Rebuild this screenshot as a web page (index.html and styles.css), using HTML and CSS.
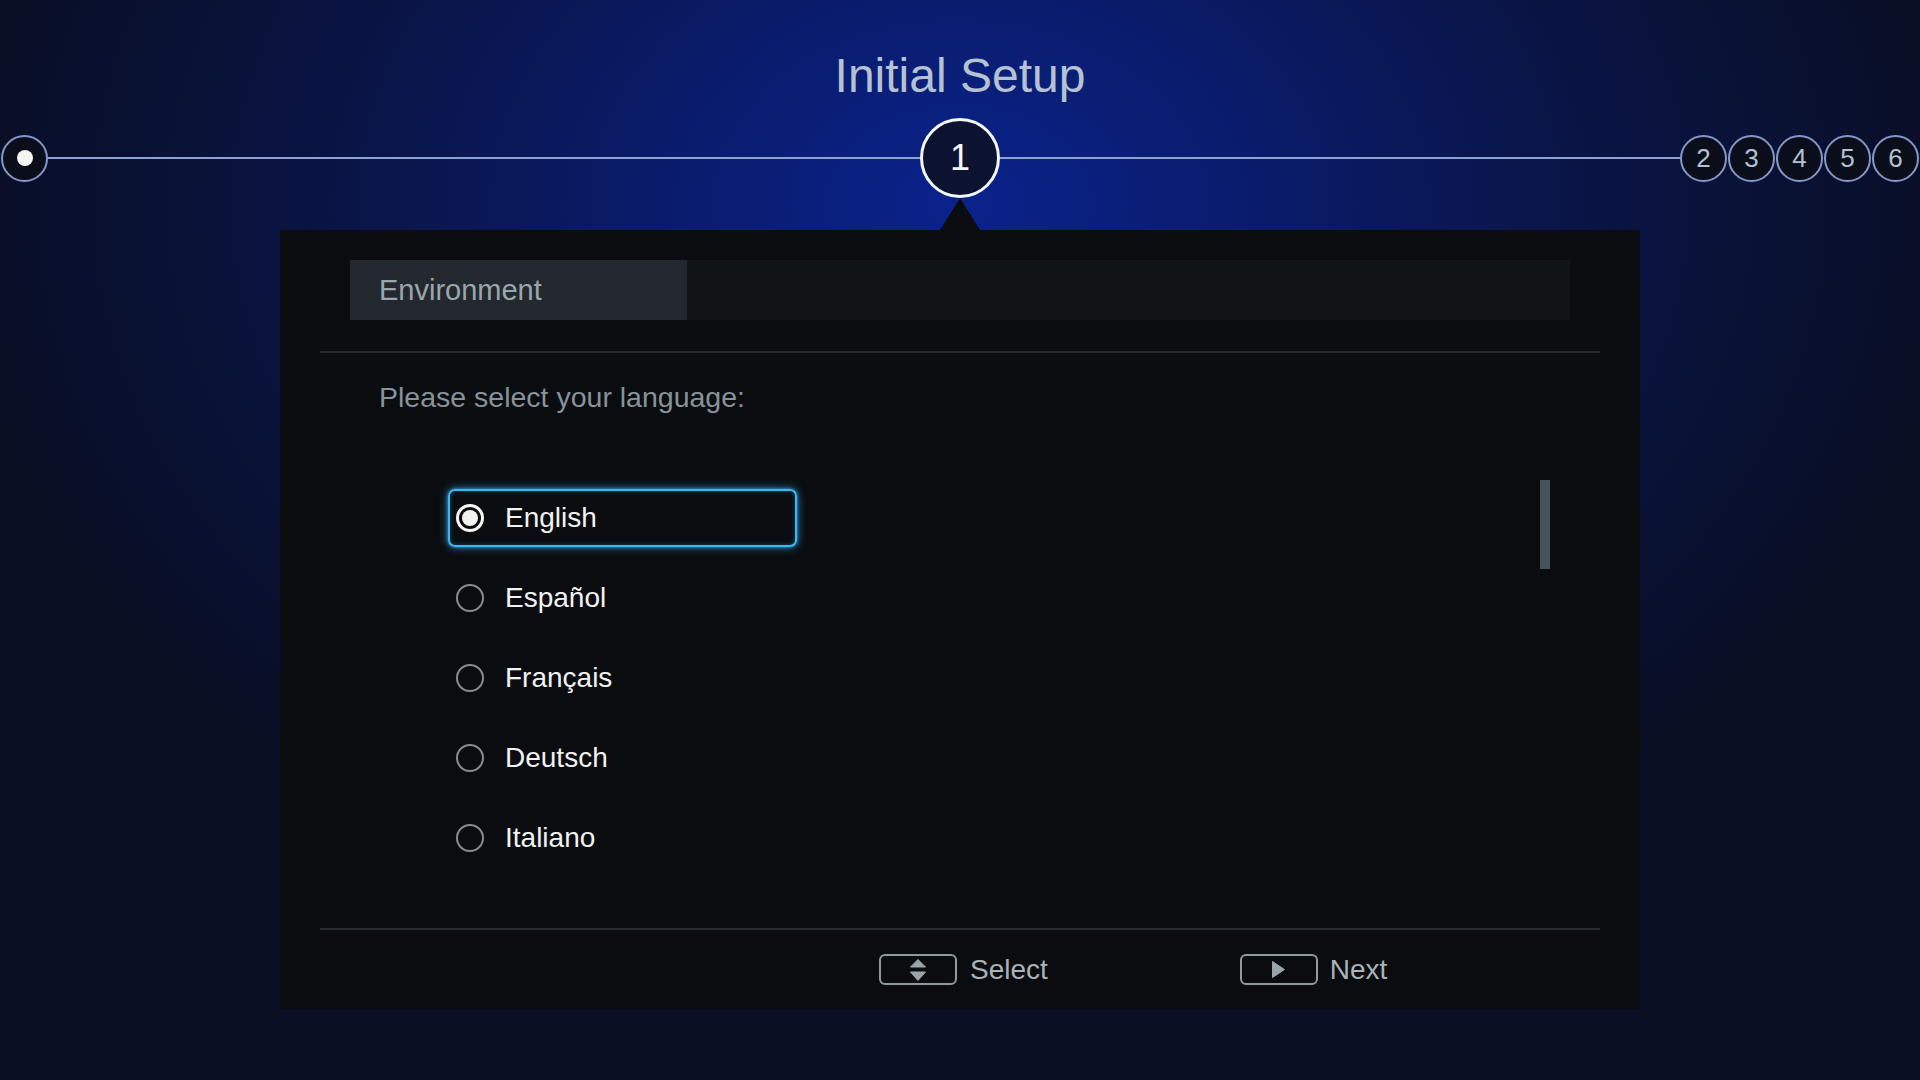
FILE: index.html
```html
<!DOCTYPE html>
<html lang="en">
<head>
    <meta charset="UTF-8">
    <meta name="viewport" content="width=device-width, initial-scale=1.0">
    <title>Initial Setup</title>
    <link rel="stylesheet" href="styles.css">
</head>
<body>
    <h1 class="title">Initial Setup</h1>

    <div class="stepper">
        <div class="stepper-side">
            <span class="step step-start"><span class="step-dot"></span></span>
            <span class="step-line"></span>
        </div>
        <div class="step-current">1</div>
        <div class="stepper-side">
            <span class="step-line"></span>
            <div class="step-group">
                <span class="step">2</span>
                <span class="step">3</span>
                <span class="step">4</span>
                <span class="step">5</span>
                <span class="step">6</span>
            </div>
        </div>
    </div>
    <div class="pointer"></div>

    <div class="panel">
        <div class="tabs">
            <div class="tab active">Environment</div>
        </div>
        <div class="divider divider-top"></div>

        <div class="content">
            <p class="prompt">Please select your language:</p>
            <div class="list">
                <ul class="options">
                    <li class="option selected"><span class="radio"></span>English</li>
                    <li class="option"><span class="radio"></span>Español</li>
                    <li class="option"><span class="radio"></span>Français</li>
                    <li class="option"><span class="radio"></span>Deutsch</li>
                    <li class="option"><span class="radio"></span>Italiano</li>
                </ul>
                <div class="scrollbar"></div>
            </div>
        </div>

        <div class="divider"></div>
        <div class="footer">
            <div class="hint">
                <span class="key">
                    <svg width="16" height="22" viewBox="0 0 16 22">
                        <polygon points="8,0.5 15.5,8 0.5,8" fill="#9aa4aa" stroke="#9aa4aa" stroke-width="1" stroke-linejoin="round"/>
                        <polygon points="0.5,13 15.5,13 8,21.5" fill="#9aa4aa" stroke="#9aa4aa" stroke-width="1" stroke-linejoin="round"/>
                    </svg>
                </span>
                Select
            </div>
            <div class="hint hint-next">
                <span class="key">
                    <svg width="13" height="17" viewBox="0 0 13 17">
                        <polygon points="0.5,0.5 12.5,8.5 0.5,16.5" fill="#9aa4aa" stroke="#9aa4aa" stroke-width="1" stroke-linejoin="round"/>
                    </svg>
                </span>
                Next
            </div>
        </div>
    </div>
</body>
</html>
```

FILE: styles.css
```css
* {
    margin: 0;
    padding: 0;
    box-sizing: border-box;
}

body {
    width: 1920px;
    height: 1080px;
    overflow: hidden;
    font-family: "Liberation Sans", Arial, sans-serif;
    background-color: #090d1e;
    background-image: radial-gradient(ellipse 1020px 760px at 50% 19%, #0a238c 0%, #0a1b6a 30%, #0a1444 62%, #090e22 100%);
}

.title {
    margin-top: 48px;
    font-size: 48px;
    font-weight: normal;
    line-height: 56px;
    text-align: center;
    color: #b6c2d2;
}

.stepper {
    display: grid;
    grid-template-columns: 1fr 80px 1fr;
    align-items: center;
    height: 80px;
    margin-top: 14px;
}

.stepper-side {
    display: flex;
    align-items: center;
}

.step-line {
    flex: 1;
    height: 2px;
    background: #8ea1d4;
}

.step {
    width: 47px;
    height: 47px;
    border: 2px solid #8596c8;
    border-radius: 50%;
    background: #0a0d1a;
    color: #b5c1d2;
    font-size: 26px;
    display: flex;
    justify-content: center;
    align-items: center;
    flex-shrink: 0;
}

.step-start {
    margin-left: 1px;
}

.step-dot {
    width: 16px;
    height: 16px;
    border-radius: 50%;
    background: #f4f4f0;
}

.step-group {
    display: flex;
    gap: 1px;
    margin-right: 1px;
}

.step-current {
    width: 80px;
    height: 80px;
    border: 3px solid #f4f6fa;
    border-radius: 50%;
    background: #0c1330;
    color: #f4f6fa;
    font-size: 36px;
    display: flex;
    justify-content: center;
    align-items: center;
}

.pointer {
    width: 0;
    height: 0;
    margin: 0 auto;
    border-left: 20px solid transparent;
    border-right: 20px solid transparent;
    border-bottom: 32px solid #0a0c0f;
}

.panel {
    width: 1360px;
    height: 779px;
    margin: 0 auto;
    padding: 30px 40px 0;
    background: #0a0c0f;
    display: flex;
    flex-direction: column;
}

.tabs {
    display: flex;
    height: 60px;
    margin: 0 30px;
    background: #111417;
}

.tab {
    width: 337px;
    padding-left: 29px;
    font-size: 29px;
    line-height: 60px;
    color: #9aa6ad;
}

.tab.active {
    background: #22282d;
}

.divider {
    height: 2px;
    background: #262c31;
}

.divider-top {
    margin-top: 31px;
}

.content {
    flex: 1;
}

.prompt {
    margin: 28px 0 0 59px;
    font-size: 28.5px;
    line-height: 32px;
    color: #87939a;
}

.list {
    display: flex;
    justify-content: space-between;
    margin-top: 76px;
    padding: 0 50px 0 128px;
}

.options {
    list-style: none;
    display: flex;
    flex-direction: column;
    gap: 22px;
}

.option {
    width: 349px;
    height: 58px;
    padding-left: 6px;
    border: 2px solid transparent;
    border-radius: 7px;
    display: flex;
    align-items: center;
    gap: 21px;
    font-size: 28px;
    color: #f1f2f2;
}

.option.selected {
    border-color: #3cb8ee;
    box-shadow: 0 0 10px rgba(45, 165, 235, 0.8), 0 0 3px rgba(60, 180, 240, 0.9), inset 0 0 4px rgba(45, 165, 235, 0.45);
}

.radio {
    width: 28px;
    height: 28px;
    border: 2px solid #868c92;
    border-radius: 50%;
    display: flex;
    justify-content: center;
    align-items: center;
    flex-shrink: 0;
}

.option.selected .radio {
    border: 3px solid #f6f6f4;
}

.option.selected .radio::after {
    content: "";
    width: 16px;
    height: 16px;
    border-radius: 50%;
    background: #f2f2ee;
}

.scrollbar {
    align-self: flex-start;
    width: 10px;
    height: 89px;
    margin-top: -9px;
    background: #48525a;
}

.footer {
    height: 79px;
    display: flex;
    align-items: center;
    padding-left: 559px;
    font-size: 28px;
    color: #aab3b9;
}

.hint {
    display: flex;
    align-items: center;
    gap: 13px;
}

.hint-next {
    margin-left: 192px;
    gap: 12px;
}

.key {
    width: 78px;
    height: 31px;
    border: 2px solid #8f999f;
    border-radius: 6px;
    display: flex;
    justify-content: center;
    align-items: center;
}

.key svg {
    display: block;
}
```
